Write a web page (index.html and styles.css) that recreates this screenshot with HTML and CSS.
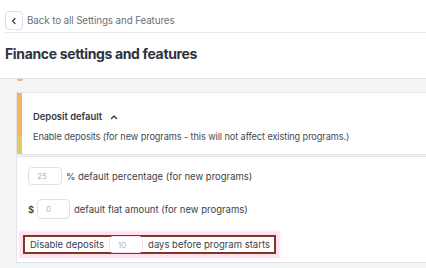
FILE: index.html
```html
<!DOCTYPE html>
<html lang="en">
<head>
    <meta charset="UTF-8">
    <title>Finance settings and features</title>
    <link rel="stylesheet" href="styles.css">
</head>
<body>
    <div class="page-header">
        <div class="back-row">
            <button class="back-button">
                <svg width="8" height="8" viewBox="0 0 8 8"><path d="M5 1.5 L2.5 4 L5 6.5" fill="none" stroke="#333" stroke-width="1.2" stroke-linecap="round" stroke-linejoin="round"/></svg>
            </button>
            <span class="back-text">Back to all Settings and Features</span>
        </div>
        <h1>Finance settings and features</h1>
    </div>
    <div class="content">
        <div class="prev-card"></div>
        <div class="card card-head">
            <div class="card-title">
                Deposit default
                <svg width="8" height="6" viewBox="0 0 8 6"><path d="M1.5 4.5 L4 2 L6.5 4.5" fill="none" stroke="#333" stroke-width="1.3" stroke-linecap="round" stroke-linejoin="round"/></svg>
            </div>
            <div class="card-desc">Enable deposits (for new programs - this will not affect existing programs.)</div>
        </div>
        <div class="card card-body">
            <div class="field-row">
                <input class="num-input" placeholder="25">
                <span>% default percentage (for new programs)</span>
            </div>
            <div class="field-row">
                <span class="dollar">$</span>
                <input class="num-input tall" placeholder="0">
                <span>default flat amount (for new programs)</span>
            </div>
            <div class="field-row">
                <div class="highlight">
                    <span>Disable deposits</span>
                    <input class="num-input" placeholder="10">
                    <span>days before program starts</span>
                </div>
            </div>
        </div>
    </div>
</body>
</html>
```

FILE: styles.css
```css
* {
    box-sizing: border-box;
}

body {
    margin: 0;
    background: #f3f4f6;
    font-family: Inter, "Noto Sans", sans-serif;
    color: #3b3f4a;
    overflow: hidden;
    width: 426px;
    height: 268px;
}

.page-header {
    background: #fff;
    padding-left: 5px;
    border-bottom: 1px solid #e3e5e9;
}

.back-row {
    display: flex;
    align-items: center;
    gap: 4px;
    padding: 11px 0 2px;
    border-bottom: 1px solid #e6e8eb;
}

.back-button {
    width: 18px;
    height: 19px;
    padding: 0;
    display: flex;
    align-items: center;
    justify-content: center;
    background: #fff;
    border: 1px solid #dde0e4;
    border-radius: 4px;
}

.back-text {
    font-size: 9.8px;
    letter-spacing: -0.1px;
    color: #6b7079;
}

h1 {
    margin: 0;
    padding: 12px 0 16px;
    font-size: 14px;
    line-height: 17px;
    font-weight: 700;
    color: #2e333d;
    letter-spacing: -0.35px;
}

.content {
    width: 440px;
    padding-left: 16px;
}

.prev-card {
    width: 6px;
    height: 2px;
    margin-left: 1px;
    background: #f6b562;
    border-radius: 0 0 2px 2px;
    margin-bottom: 11px;
}

.card {
    background: #fff;
    border: 1px solid #e2e4e8;
}

.card-head {
    padding: 17px 0 10px 16px;
    background: linear-gradient(to bottom, #f6b562 70%, #dbcc68 70%) left top / 5px 100% no-repeat, #fff;
}

.card-title {
    display: flex;
    align-items: center;
    gap: 8px;
    font-size: 9.4px;
    font-weight: 600;
    line-height: 14px;
    color: #353a44;
}

.card-desc {
    margin-top: 6px;
    font-size: 9.2px;
    letter-spacing: -0.1px;
    line-height: 14px;
    color: #464a54;
}

.card-body {
    margin-top: 1px;
    padding: 10px 0 8px 11px;
    height: 107px;
}

.field-row {
    display: flex;
    align-items: center;
    gap: 4px;
    font-size: 9.5px;
    margin-bottom: 14px;
}

.field-row:last-child {
    margin-top: 16px;
    margin-bottom: 0;
    margin-left: -5px;
}

.dollar {
    font-weight: 600;
    width: 5px;
}

.num-input {
    width: 34px;
    height: 18px;
    padding: 0 0 0 8px;
    border: 1px solid #dfe1e5;
    border-radius: 4px;
    font-family: Inter, sans-serif;
    font-size: 8px;
    color: #333;
}

.num-input::placeholder {
    color: #b3b6bc;
}

.num-input.tall {
    height: 20px;
    width: 33px;
}

.highlight {
    display: flex;
    align-items: center;
    gap: 5px;
    height: 19px;
    padding: 0 4px 0 5px;
    border: 2px solid #843522;
    box-shadow: 0 0 2px 4px #fde1f1;
    background: #fff;
}

.highlight .num-input {
    height: 17px;
    border-color: #f6e2ee;
}
```
